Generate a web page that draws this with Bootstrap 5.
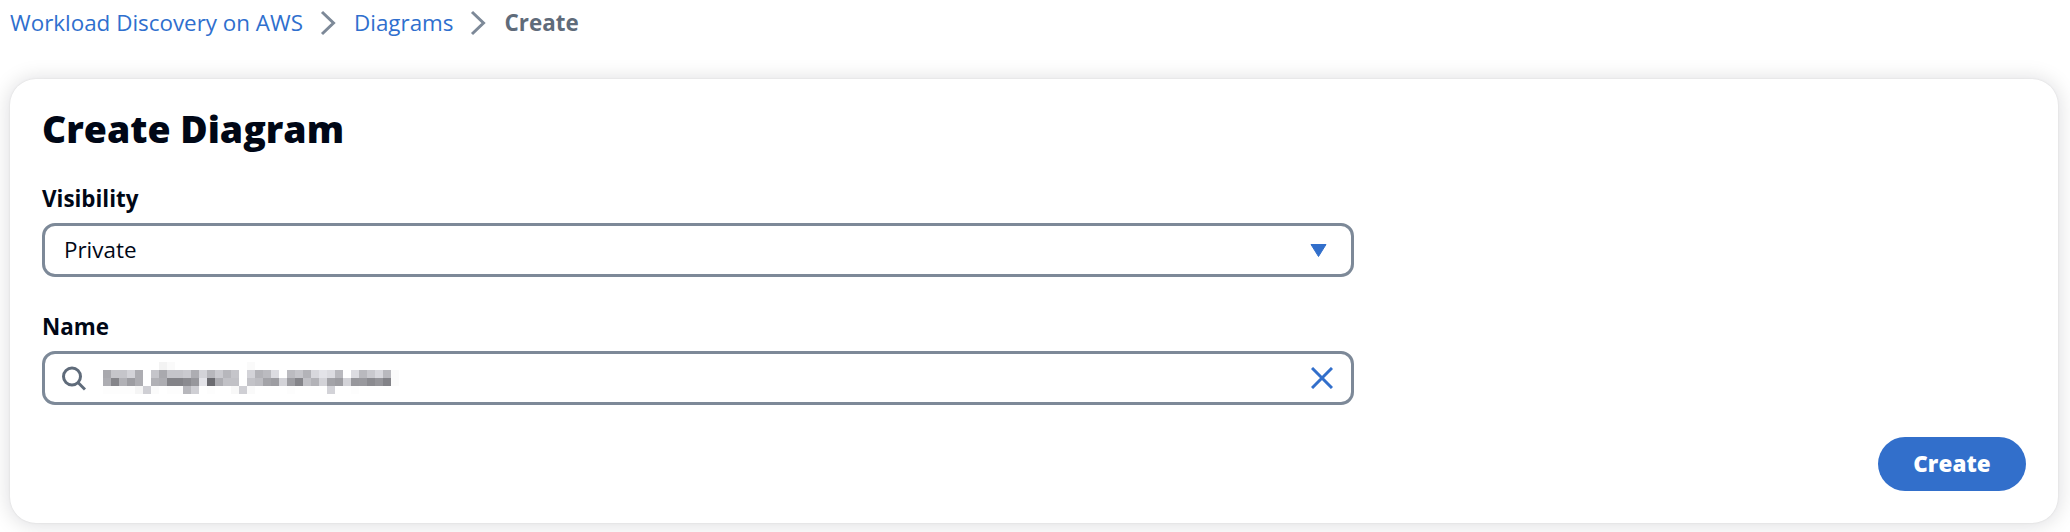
<!DOCTYPE html>
<html lang="en">
<head>
<meta charset="utf-8">
<title>Create Diagram</title>
<link href="https://cdn.jsdelivr.net/npm/bootstrap@5.3.0/dist/css/bootstrap.min.css" rel="stylesheet">
<style>
body{font-family:"Open Sans","Noto Sans",sans-serif;font-size:22.4px;line-height:32px;color:#000716;background:#fff;min-height:532px;padding-bottom:9px}
.crumbs{padding:7px 10px 0;height:79px;--bs-breadcrumb-margin-bottom:0}
.crumbs a{color:#2f6fce}
.crumbs .current{color:#5f6b7a}
.crumbs svg{margin:0 18px 0 17px}
.panel{margin:0 12px 0 10px;height:444px;padding:25px 32px 32px;border:0;border-radius:26px;box-shadow:0 0 2px rgba(0,7,22,.10),0 1px 20px 2px rgba(0,7,22,.13)}
.panel h1{font-size:37.4px;font-weight:800;line-height:50px;margin:0 0 29px}
.field{width:1312px;margin-bottom:34px}
.field label{display:block;line-height:32px;margin-bottom:8px}
.control{height:54px;border:3px solid #7d8998;border-radius:13px;padding:0 18px 0 19px}
.caret{margin-right:6px}
.lens{margin-left:-2px}
.redacted{margin-left:17px}
.create{width:148px;height:54px;border-radius:27px;background:#326fcb;color:#fff;font-size:22.4px;font-weight:800;padding:0;letter-spacing:.1px}
</style>
</head>
<body>
<nav aria-label="breadcrumb">
  <ol class="crumbs breadcrumb d-flex align-items-start flex-nowrap">
    <li class="d-flex align-items-center"><a class="text-decoration-none" href="#">Workload Discovery on AWS</a><svg width="16" height="26" viewBox="0 0 16 26" fill="none" stroke="#7d8998" stroke-width="3"><path d="M2 2 13.500 13 2 24"/></svg></li>
    <li class="d-flex align-items-center"><a class="text-decoration-none" href="#">Diagrams</a><svg width="16" height="26" viewBox="0 0 16 26" fill="none" stroke="#7d8998" stroke-width="3"><path d="M2 2 13.500 13 2 24"/></svg></li>
    <li class="current fw-bold">Create</li>
  </ol>
</nav>
<main class="panel card">
  <h1>Create Diagram</h1>
  <div class="field">
    <label class="fw-bold">Visibility</label>
    <div class="control d-flex align-items-center justify-content-between" role="button">
      <span>Private</span>
      <svg class="caret" width="17" height="13" viewBox="0 0 17 13"><path d="M1 .5h15L8.500 12.500z" fill="#326fcb" stroke="#326fcb" stroke-linejoin="round"/></svg>
    </div>
  </div>
  <div class="field mb-0">
    <label class="fw-bold">Name</label>
    <div class="control d-flex align-items-center">
      <svg class="lens" width="24" height="25" viewBox="0 0 24 25" fill="none" stroke="#5f6b7a" stroke-width="3"><circle cx="10" cy="10.500" r="8.500"/><path d="M16 16.500 23 23.500"/></svg>
      <svg id="redacted" class="redacted" width="296" height="32" shape-rendering="crispEdges"></svg>
      <svg class="ms-auto" width="22" height="22" viewBox="0 0 22 22" stroke="#326fcb" stroke-width="3"><path d="M1 1 21 21M21 1 1 21"/></svg>
    </div>
  </div>
  <div class="d-flex justify-content-end mt-auto"><button class="create btn">Create</button></div>
</main>
<script>
// Grey level of each 8px block in the obscured name, one string per row.
const rows = [
  "ffffffffffffff f3fa ffffffffffffffffff fa ffffffffffffffffffffffffffffffffffff",
  "a9c5c5d3adffc5a9c5c5caadd3b7cab7c5ff d3b3bbdcffbbc5b3d8e3dcb9ffdcb9c9d8b9fb",
  "ad85b19dadffb1ad83838b97e36badc1c1ff c3bda39dd39d85c1b3d3a39dd397998b9583fb",
  "fdfdfdfdf5cffbfffdfdb7cffffdfffff8cf fafffffffffdffffffffd3fffffdffffffffff"
];
document.getElementById("redacted").innerHTML = rows.map((r, y) =>
  r.replace(/ /g, "").match(/../g).map((v, x) => {
    const n = parseInt(v, 16), b = n > 240 ? n : n + 5;
    return n === 255 ? "" : `<rect x="${x * 8}" y="${y * 8}" width="8" height="8" fill="rgb(${n},${n},${b})"/>`;
  }).join("")).join("");
</script>
<script src="https://cdn.jsdelivr.net/npm/bootstrap@5.3.0/dist/js/bootstrap.bundle.min.js"></script>
</body>
</html>
